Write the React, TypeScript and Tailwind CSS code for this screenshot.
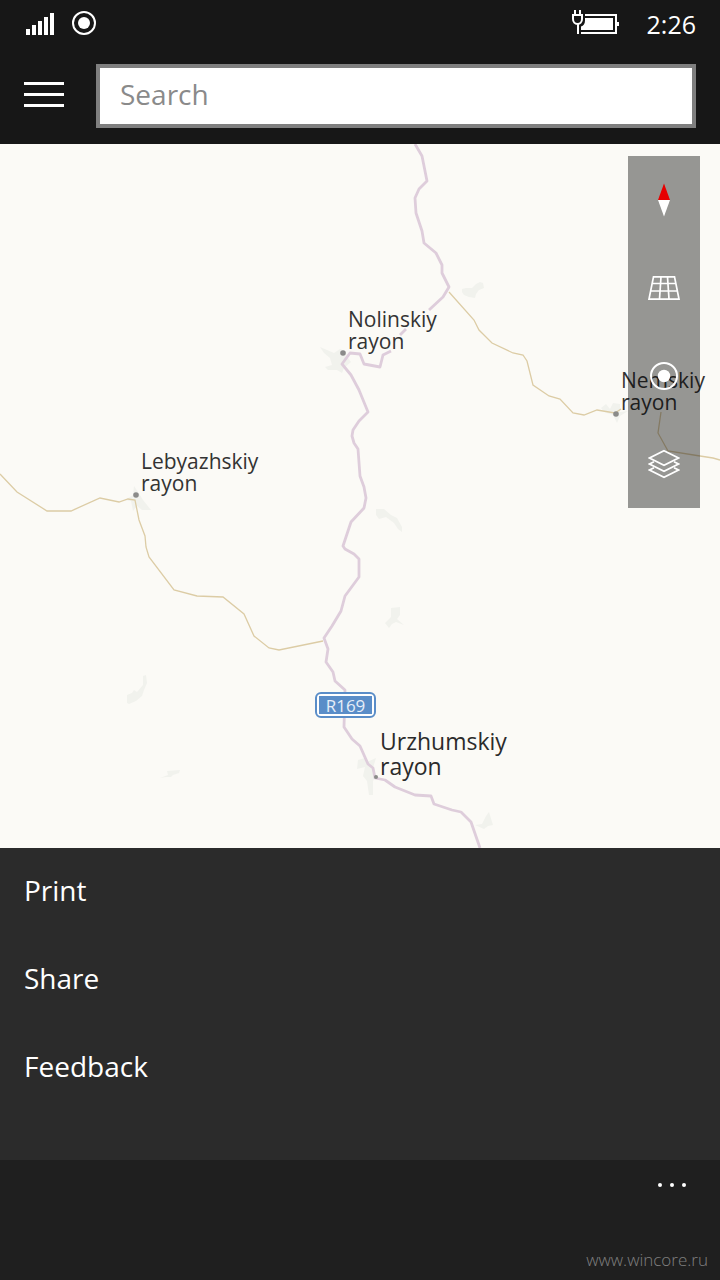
import type { ReactNode } from "react";

const MENU_ITEMS = ["Print", "Share", "Feedback"];

function StatusBar() {
	return (
		<div className="flex h-12 items-center justify-between px-6">
			<div className="flex items-center gap-4 pb-0.5">
				<svg className="h-6 w-8" viewBox="0 0 32 24" fill="#fff" aria-label="Signal">
					<path d="M2 18h4v6H2zM8 14h4v10H8zM14 10h4v14h-4zM20 6h4v18h-4zM26 2h4v22h-4z" />
				</svg>
				<svg className="h-6 w-6" viewBox="0 0 24 24" aria-label="Location in use">
					<circle cx="12" cy="12" r="11" fill="none" stroke="#fff" strokeWidth="2" />
					<circle cx="12" cy="12" r="6" fill="#fff" />
				</svg>
			</div>
			<div className="flex items-center gap-7">
				<svg className="h-[26px] w-12 pb-0.5" viewBox="0 0 48 24" overflow="visible" aria-label="Battery charging">
					<path d="M14 4H45V22H10" fill="none" stroke="#fff" strokeWidth="2" />
					<path d="M14 7H42V19H10V15.500C12.500 15 14 12.500 14 9.500Z" fill="#fff" />
					<path d="M46 11h2v4h-2z" fill="#fff" />
					<path d="M2 4H11V8C11 11 9 13 6.500 13S2 11 2 8ZM4 3V-1M9 3V-1M7 13V23" fill="none" stroke="#fff" strokeWidth="2" />
				</svg>
				<span className="text-[25px] leading-8 text-white">2:26</span>
			</div>
		</div>
	);
}

function SearchBar() {
	return (
		<div className="flex h-24 items-center gap-8 px-6">
			<button type="button" aria-label="Menu" className="flex w-10 shrink-0 flex-col gap-2 pb-1">
				<span className="h-[3px] w-full bg-white" />
				<span className="h-[3px] w-full bg-white" />
				<span className="h-[3px] w-full bg-white" />
			</button>
			<input
				type="search"
				aria-label="Search"
				placeholder="Search"
				className="h-16 min-w-0 flex-1 border-4 border-[#7f7f7f] bg-white px-5 pb-1 text-[28px] text-black placeholder:text-[#8a8a8a] outline-none"
			/>
		</div>
	);
}

function MapCanvas() {
	return (
		<svg
			className="absolute inset-0 h-full w-full"
			viewBox="0 144 720 704"
			preserveAspectRatio="xMinYMin slice"
			fill="none"
			aria-hidden="true"
		>
			{/* settlements */}
			<g fill="#f1f2ed">
				<path d="M462 289l4-1 6 0 4-4 2-1 2-1 3 1 1 5-5 2-3 4-1 4-6-1-5-2-2-3z" />
				<path d="M320 347l7 3 7 3 6-4 5 2 3 7 3 4-7 6-2 5-5-3-9 0-3-3 7-2-2-7-6-5z" />
				<path d="M376 509l8 0 7 6 6 3 5 9 0 5-4-3-4-6-8-6-7 2-3-4z" />
				<path d="M391 608l9-1 0 8-3 4 7 6-8-3-4 2-3 4-4-5 6-6z" />
				<path d="M143 676l3-1 1 8-3 7-2 6-6 5-7 3-2-1 0-8 5-2 2-3 3 2 6-7z" />
				<path d="M134 486l4 6 5 8 8 10-9 0-5-4-4 5-2-10-6-1 8-5z" />
				<path d="M160 778l8-3-1-4 13-1-1 3-6 2-2 2-5 0z" />
				<path d="M358 760l7-2 2 4 9-4-3 10 3 8-3 5 0 14-4 0-2-14-4-5 2-9-8 2z" />
				<path d="M475 825l7-1 4-8 3-4 4 13-5 1-4 3z" />
				<path d="M601 408l5-4 4 5 3-6 7 1 0 8 8-1-8 5-3 7-4-8-9-3z" />
			</g>

			{/* local roads */}
			<g stroke="#dccca5" strokeWidth="1.3">
				<path d="M0 474L17 492 47 511 71 511 100 498 119 502 128 499 135 500 139 520 145 536 146 547 149 557 174 590 197 596 223 597 244 614 254 636 269 648 279 650 323 641" />
				<path d="M449 292L474 320 479 330 492 343 513 353 523 355 527 361 533 385 549 396 560 399 573 413 584 415 597 410 615 413 621 409" />
				<path d="M661 412L658 433 668 451 700 456 713 458 720 460" />
			</g>

			{/* R169 */}
			<g stroke="#decddb" strokeWidth="2.8" strokeLinejoin="round">
				<path d="M415 144L422 156 427 181 419 189 415 198 416 213 422 231 424 243 436 253 442 265 442 273 449 287 443 297 429 310" />
				<path d="M406 329L400 335" />
				<path d="M391 351L383 355 380 367 364 364 360 354 350 353 342 364 351 375 359 390 368 412 359 421 353 430 352 436 354 443 358 449 360 476 364 487 366 498 364 508 351 522 343 546 345 549 354 554 359 559 359 577 345 596 341 611 332 626 324 638 328 649 326 662 333 672 335 681 345 690 344 727 352 739 360 746 368 764 373 768 375 778 385 780 395 787 415 795 431 796 434 804 452 810 461 812 471 822 480 848" />
			</g>

			{/* town markers */}
			<g fill="#8b8b89">
				<circle cx="343" cy="353" r="2.800" />
				<circle cx="136" cy="495" r="2.800" />
				<circle cx="616" cy="414" r="2.800" />
				<circle cx="376" cy="777" r="2" />
			</g>
		</svg>
	);
}

function MapButton({ label, children }: { label: string; children: ReactNode }) {
	return (
		<button type="button" aria-label={label} className="flex h-22 w-18 items-center justify-center">
			{children}
		</button>
	);
}

function MapControls() {
	return (
		<div className="absolute right-5 top-3 flex flex-col bg-black/40">
			<MapButton label="Rotate to north">
				<svg className="h-8 w-8 overflow-visible" viewBox="0 0 32 32">
					<path d="M16-.5L22 16H10z" fill="#e60000" />
					<path d="M10 16H22L16 32.500z" fill="#fff" />
				</svg>
			</MapButton>
			<MapButton label="Tilt">
				<svg className="h-8 w-8" viewBox="0 0 32 32" fill="none" stroke="#fff" strokeWidth="1.700">
					<path d="M5.500 4.800H26.500L31 27.200H1zM4 11.500H28M2.500 19H29.500M13 5L11.500 27M19.500 5L21 27" />
				</svg>
			</MapButton>
			<MapButton label="Show my location">
				<svg className="h-8 w-8" viewBox="0 0 32 32">
					<circle cx="16" cy="16" r="13" fill="none" stroke="#fff" strokeWidth="2" />
					<circle cx="16" cy="16" r="6.200" fill="#fff" />
				</svg>
			</MapButton>
			<MapButton label="Map views">
				<svg className="h-8 w-8" viewBox="0 0 32 32" fill="none" stroke="#fff" strokeWidth="1.700">
					<path d="M16 2.800L30.500 10 16 17.200 1.500 10z" />
					<path d="M6 13.800L1.500 16 16 23.200 30.500 16 26 13.800" />
					<path d="M6 19.800L1.500 22 16 29.200 30.500 22 26 19.800" />
				</svg>
			</MapButton>
		</div>
	);
}

function MapView() {
	return (
		<main className="relative min-h-[704px] flex-1 overflow-hidden bg-[#fbfaf6] text-[#333]">
			<MapCanvas />
			<p className="absolute left-[348px] top-[164px] text-[21px] leading-[22px]">
				Nolinskiy<br />rayon
			</p>
			<p className="absolute left-[141px] top-[306px] text-[21px] leading-[22px]">
				Lebyazhskiy<br />rayon
			</p>
			<p className="absolute left-[621px] top-[225px] text-[21px] leading-[22px]">
				Nemskiy<br />rayon
			</p>
			<p className="absolute left-[380px] top-[585px] text-[23px] leading-[25px] text-[#2b2b2b]">
				Urzhumskiy<br />rayon
			</p>
			<span className="absolute left-[315px] top-[548px] flex h-[26px] w-[61px] rounded-md border-2 border-[#5a8dc8] bg-white p-0.5">
				<span className="flex flex-1 items-center justify-center bg-[#5a8dc8] text-[17px] leading-none text-[#e6eef8]">
					R169
				</span>
			</span>
			<MapControls />
		</main>
	);
}

export default function App() {
	return (
		<div className="flex min-h-screen flex-col bg-[#171717] font-['Open_Sans','Noto_Sans',sans-serif]">
			<header>
				<StatusBar />
				<SearchBar />
			</header>
			<MapView />
			<nav className="bg-[#2b2b2b] pb-12">
				<ul>
					{MENU_ITEMS.map((item) => (
						<li key={item}>
							<button type="button" className="h-22 w-full px-6 pb-1 text-left text-[28px] text-white">
								{item}
							</button>
						</li>
					))}
				</ul>
			</nav>
			<footer className="flex h-30 flex-col items-end justify-between bg-[#1f1f1f]">
				<button type="button" aria-label="More" className="flex h-[50px] items-center gap-2 px-[34px]">
					<span className="h-1 w-1 rounded-full bg-white" />
					<span className="h-1 w-1 rounded-full bg-white" />
					<span className="h-1 w-1 rounded-full bg-white" />
				</button>
				<a href="#" className="px-3 pb-2 text-[17px] leading-6 font-light text-[#808080]">
					www.wincore.ru
				</a>
			</footer>
		</div>
	);
}
